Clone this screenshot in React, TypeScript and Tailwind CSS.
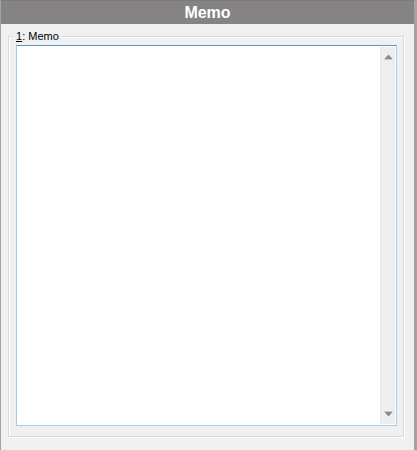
import React from "react";

const ScrollArrow: React.FC<{ dir: "up" | "down" }> = ({ dir }) => (
    <svg width="9" height="6" viewBox="0 0 9 6" className="block">
        {dir === "up" ? (
            <>
                <polygon points="4.5,0.5 8.5,5 0.5,5" fill="#8a8a8a" />
                <line x1="0.5" y1="5.5" x2="8.5" y2="5.5" stroke="#c8c8c8" />
            </>
        ) : (
            <>
                <line x1="0.5" y1="0.5" x2="8.5" y2="0.5" stroke="#c8c8c8" />
                <polygon points="0.5,1 8.5,1 4.5,5.5" fill="#8a8a8a" />
            </>
        )}
    </svg>
);

const App: React.FC = () => {
    return (
        <div className="w-[417px] h-[450px] bg-[#f0f0f0] border-l border-r-[3px] border-[#a3a3a3] flex flex-col font-['Liberation_Sans',Arial,sans-serif]">
            {/* Title bar */}
            <div className="h-[24px] bg-[#858384] border-t border-[#7a7879] flex items-center justify-center">
                <span className="text-white font-bold text-[16px] leading-none">
                    Memo
                </span>
            </div>

            {/* Group box */}
            <div className="pt-[5px] pl-[7px]">
                <fieldset className="w-[396px] h-[408px] border border-[#d2dce3] shadow-[inset_1px_1px_0_#ffffff,1px_1px_0_#ffffff] pl-[7px] pb-[10px] flex flex-col">
                    <legend className="ml-[-2px] px-[2px] bg-[#f0f0f0] text-[11px] leading-[14px] text-black">
                        <span className="underline">1</span>: Memo
                    </legend>

                    {/* Memo text box */}
                    <div className="mt-[2px] w-[381px] flex-1 border border-[#a9cbe3] border-t-[#5d97c8] bg-white flex p-px">
                        <textarea
                            className="flex-1 resize-none outline-none bg-white text-[11px] p-[2px]"
                            defaultValue=""
                        />
                        <div className="w-[15px] bg-[#eeeeee] border-l border-[#e4e4e4] flex flex-col items-center justify-between py-[7px]">
                            <ScrollArrow dir="up" />
                            <ScrollArrow dir="down" />
                        </div>
                    </div>
                </fieldset>
            </div>
        </div>
    );
};

export default App;
